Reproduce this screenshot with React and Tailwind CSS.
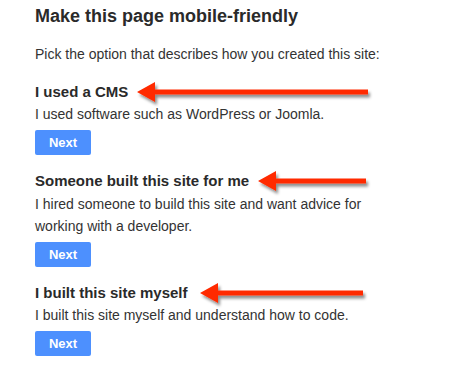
const Arrow = ({ length }) => (
  <svg
    width={length + 8}
    height="30"
    viewBox={`0 0 ${length + 8} 30`}
    className="shrink-0 -my-[4px] overflow-visible"
  >
    <defs>
      <filter id={`sh${length}`} x="-10%" y="-50%" width="130%" height="220%">
        <feDropShadow dx="2" dy="3" stdDeviation="1.6" floodColor="#000" floodOpacity="0.45" />
      </filter>
    </defs>
    <polygon
      points={`0,15 18,5 18,12.5 ${length},12.5 ${length},17.5 18,17.5 18,25`}
      fill="#ff2b06"
      filter={`url(#sh${length})`}
    />
  </svg>
);

const options = [
  {
    title: "I used a CMS",
    text: "I used software such as WordPress or Joomla.",
    gap: 9,
    arrow: 231,
  },
  {
    title: "Someone built this site for me",
    text: "I hired someone to build this site and want advice for working with a developer.",
    gap: 9,
    arrow: 108,
  },
  {
    title: "I built this site myself",
    text: "I built this site myself and understand how to code.",
    gap: 12,
    arrow: 163,
  },
];

export default function App() {
  return (
    <div className="w-[451px] h-[372px] bg-white pl-[35px] pt-[4px] text-[#333] font-['Liberation_Sans',Arial,sans-serif]">
      <div className="w-[360px]">
        <h1 className="text-[18px] leading-[24px] font-bold text-[#2a2a2a]">Make this page mobile-friendly</h1>
        <p className="mt-[14.5px] text-[14px] leading-[22px]">
          Pick the option that describes how you created this site:
        </p>

        {options.map((opt, i) => (
          <div key={opt.title} className={i === 0 ? "mt-[16px]" : "mt-[15px]"}>
            <div className="flex items-center h-[22px]">
              <h2 className="text-[15px] leading-[22px] font-bold text-[#2a2a2a] whitespace-nowrap">{opt.title}</h2>
              <div style={{ marginLeft: opt.gap }} className="flex items-center">
                <Arrow length={opt.arrow} />
              </div>
            </div>
            <p className="mt-[0.5px] text-[14px] leading-[22px]">{opt.text}</p>
            <button className="mt-[5px] block w-[56px] h-[25px] rounded-[2px] bg-[#4d90fe] text-white text-[13px] font-bold leading-[25px]">
              Next
            </button>
          </div>
        ))}
      </div>
    </div>
  );
}
